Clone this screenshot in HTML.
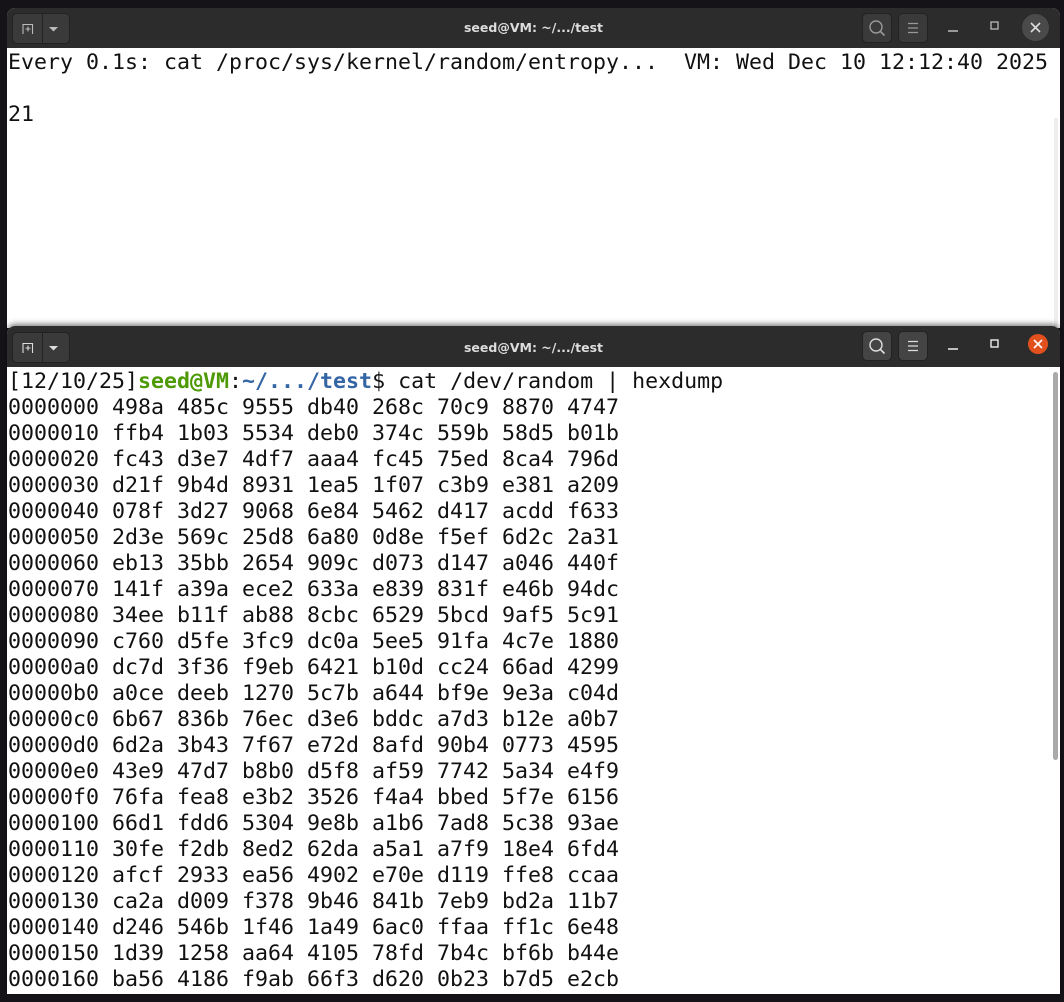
<!DOCTYPE html>
<html><head><meta charset="utf-8"><style>
body{margin:0;width:1064px;height:1002px;background:#151318;overflow:hidden;position:relative;font-family:"DejaVu Sans Mono","Liberation Mono",monospace}
.win{position:absolute;left:7px;width:1053px;background:#fff;border-radius:8px 8px 0 0;overflow:hidden}
.tb{height:40px;background:#2c2c2c;position:relative}
.title{position:absolute;left:0;right:0;top:12px;text-align:center;color:#ddd;font:bold 12.5px "DejaVu Sans","Liberation Sans",sans-serif}
.btnl{position:absolute;left:5px;top:5px;width:56px;height:29px;border-radius:5px;background:#3a3a3a;border:1px solid #222}
.btnl .sep{position:absolute;left:29px;top:0;bottom:0;width:1px;background:#222}
.ib{position:absolute;top:5px;width:28px;height:28px;border-radius:5px;background:#3a3a3a;border:1px solid #222}
.term{font-size:21.6px;line-height:26px;white-space:pre;color:#111;padding-left:1px}
.g{color:#4e9a06;font-weight:bold}.b{color:#3465a4;font-weight:bold}
</style></head><body>
<div class="win" style="top:8px;height:320px">
 <div class="tb">
  <div class="btnl"><svg width="56" height="29" style="position:absolute;left:0;top:0"><path d="M10 20V10.5h9.5V20M12.5 15h5M15 12.5v5" stroke="#bbb" stroke-width="1.1" fill="none"/><path d="M36 13h9l-4.5 4.5z" fill="#bbb"/></svg><div class="sep"></div></div>
  <div class="title">seed@VM: ~/.../test</div>
  <div class="ib" style="left:855px"><svg width="28" height="28"><circle cx="13" cy="13" r="6" stroke="#999" stroke-width="1.4" fill="none"/><path d="M17.5 17.5l4 4" stroke="#999" stroke-width="1.6"/></svg></div>
  <div class="ib" style="left:891px"><svg width="28" height="28"><path d="M9 9.5h10M9 14h10M9 18.5h10" stroke="#999" stroke-width="1.3"/></svg></div>
  <svg style="position:absolute;left:938px;top:10px" width="20" height="20"><path d="M3 13h10" stroke="#bbb" stroke-width="1.4"/></svg>
  <svg style="position:absolute;left:980px;top:10px" width="20" height="20"><rect x="4" y="4" width="7" height="7" stroke="#bbb" stroke-width="1.3" fill="none"/></svg>
  <div style="position:absolute;left:1015px;top:6px;width:27px;height:27px;border-radius:50%;background:#4a4a4a"><svg width="27" height="27"><path d="M9 9l9 9M18 9l-9 9" stroke="#ddd" stroke-width="1.6"/></svg></div>
 </div>
 <div style="position:absolute;left:1047px;top:110px;width:4px;height:210px;background:#eee"></div>
 <div class="term" style="padding-top:2px">Every 0.1s: cat /proc/sys/kernel/random/entropy...  VM: Wed Dec 10 12:12:40 2025

21</div>
</div>
<div class="win" style="top:326px;height:668px;box-shadow:0 -2px 6px rgba(0,0,0,.5)">
 <div class="tb" style="height:41px">
  <div class="btnl" style="top:6px"><svg width="56" height="29" style="position:absolute;left:0;top:0"><path d="M10 20V10.5h9.5V20M12.5 15h5M15 12.5v5" stroke="#ddd" stroke-width="1.1" fill="none"/><path d="M36 13h9l-4.5 4.5z" fill="#ddd"/></svg><div class="sep"></div></div>
  <div class="title" style="top:14px">seed@VM: ~/.../test</div>
  <div class="ib" style="left:855px;background:#444"><svg width="28" height="28"><circle cx="13" cy="13" r="6" stroke="#ddd" stroke-width="1.4" fill="none"/><path d="M17.5 17.5l4 4" stroke="#ddd" stroke-width="1.6"/></svg></div>
  <div class="ib" style="left:891px;background:#444"><svg width="28" height="28"><path d="M9 9.5h10M9 14h10M9 18.5h10" stroke="#ddd" stroke-width="1.3"/></svg></div>
  <svg style="position:absolute;left:938px;top:10px" width="20" height="20"><path d="M3 13h10" stroke="#eee" stroke-width="1.5"/></svg>
  <svg style="position:absolute;left:980px;top:10px" width="20" height="20"><rect x="4" y="4" width="7" height="7" stroke="#eee" stroke-width="1.4" fill="none"/></svg>
  <div style="position:absolute;left:1021px;top:8px;width:20px;height:20px;border-radius:50%;background:#e2501e"><svg width="20" height="20"><path d="M6 6l8 8M14 6l-8 8" stroke="#fff" stroke-width="1.6"/></svg></div>
 </div>
 <div style="position:absolute;left:1046px;top:46px;width:5px;height:388px;border-radius:3px;background:#aaa"></div>
 <div class="term" style="padding-top:2px">[12/10/25]<span class="g">seed@VM</span>:<span class="b">~/.../test</span>$ cat /dev/random | hexdump
0000000 498a 485c 9555 db40 268c 70c9 8870 4747
0000010 ffb4 1b03 5534 deb0 374c 559b 58d5 b01b
0000020 fc43 d3e7 4df7 aaa4 fc45 75ed 8ca4 796d
0000030 d21f 9b4d 8931 1ea5 1f07 c3b9 e381 a209
0000040 078f 3d27 9068 6e84 5462 d417 acdd f633
0000050 2d3e 569c 25d8 6a80 0d8e f5ef 6d2c 2a31
0000060 eb13 35bb 2654 909c d073 d147 a046 440f
0000070 141f a39a ece2 633a e839 831f e46b 94dc
0000080 34ee b11f ab88 8cbc 6529 5bcd 9af5 5c91
0000090 c760 d5fe 3fc9 dc0a 5ee5 91fa 4c7e 1880
00000a0 dc7d 3f36 f9eb 6421 b10d cc24 66ad 4299
00000b0 a0ce deeb 1270 5c7b a644 bf9e 9e3a c04d
00000c0 6b67 836b 76ec d3e6 bddc a7d3 b12e a0b7
00000d0 6d2a 3b43 7f67 e72d 8afd 90b4 0773 4595
00000e0 43e9 47d7 b8b0 d5f8 af59 7742 5a34 e4f9
00000f0 76fa fea8 e3b2 3526 f4a4 bbed 5f7e 6156
0000100 66d1 fdd6 5304 9e8b a1b6 7ad8 5c38 93ae
0000110 30fe f2db 8ed2 62da a5a1 a7f9 18e4 6fd4
0000120 afcf 2933 ea56 4902 e70e d119 ffe8 ccaa
0000130 ca2a d009 f378 9b46 841b 7eb9 bd2a 11b7
0000140 d246 546b 1f46 1a49 6ac0 ffaa ff1c 6e48
0000150 1d39 1258 aa64 4105 78fd 7b4c bf6b b44e
0000160 ba56 4186 f9ab 66f3 d620 0b23 b7d5 e2cb</div>
</div>
</body></html>
